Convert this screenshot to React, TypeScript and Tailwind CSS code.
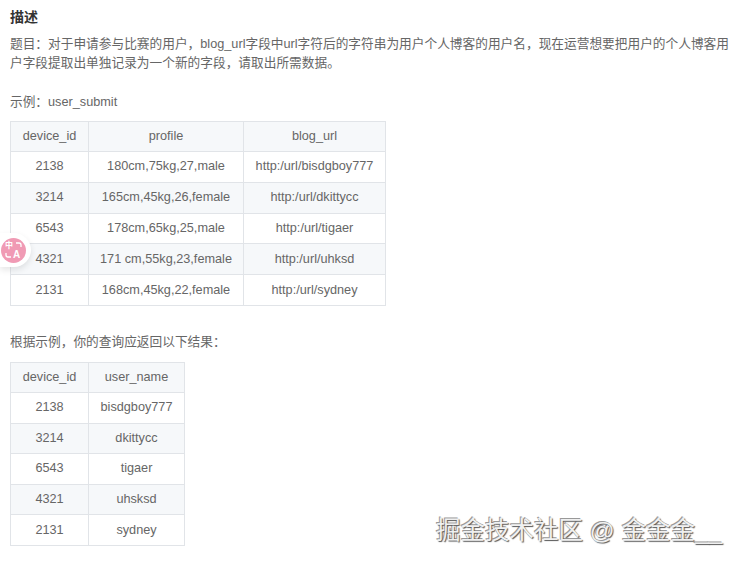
import React from "react";

const sourceRows = [
  ["2138", "180cm,75kg,27,male", "http:/url/bisdgboy777"],
  ["3214", "165cm,45kg,26,female", "http:/url/dkittycc"],
  ["6543", "178cm,65kg,25,male", "http:/url/tigaer"],
  ["4321", "171 cm,55kg,23,female", "http:/url/uhksd"],
  ["2131", "168cm,45kg,22,female", "http:/url/sydney"],
];

const resultRows = [
  ["2138", "bisdgboy777"],
  ["3214", "dkittycc"],
  ["6543", "tigaer"],
  ["4321", "uhsksd"],
  ["2131", "sydney"],
];

type DataTableProps = {
  head: string[];
  rows: string[][];
  widths: string[];
  rowHeight: string;
  className: string;
};

const DataTable = ({ head, rows, widths, rowHeight, className }: DataTableProps) => {
  return (
    <table className={`table-fixed border-collapse text-[12.7px] text-[#666] ${className}`}>
      <colgroup>
        {widths.map((w, i) => (
          <col key={i} className={w} />
        ))}
      </colgroup>
      <thead>
        <tr className="h-[30px] bg-[#f6f8fa]">
          {head.map((h) => (
            <th key={h} className="border border-[#e1e4e8] p-0 text-center font-normal">
              {h}
            </th>
          ))}
        </tr>
      </thead>
      <tbody>
        {rows.map((row, i) => (
          <tr key={row[0]} className={`${rowHeight} ${i % 2 === 1 ? "bg-[#f6f8fa]" : "bg-white"}`}>
            {row.map((cell) => (
              <td key={cell} className="border border-[#e1e4e8] p-0 text-center">
                {cell}
              </td>
            ))}
          </tr>
        ))}
      </tbody>
    </table>
  );
};

export default function App() {
  return (
    <div className="relative h-[563px] w-[739px] overflow-hidden bg-white pl-[10px] pt-[9px] font-['Liberation_Sans','Noto_Sans_CJK_SC',sans-serif] text-[#666]">
      <h2 className="text-[14px] font-bold leading-[17px] text-[#333]">描述</h2>
      <p className="mt-[9px] w-[720px] text-[12.7px] leading-[19px]">
        题目：对于申请参与比赛的用户，blog_url字段中url字符后的字符串为用户个人博客的用户名，现在运营想要把用户的个人博客用户字段提取出单独记录为一个新的字段，请取出所需数据。
      </p>
      <p className="mt-[20px] text-[12.7px] leading-[19px]">示例：user_submit</p>
      <DataTable
        className="mt-[9px] w-[375px]"
        head={["device_id", "profile", "blog_url"]}
        rows={sourceRows}
        rowHeight="h-[30.8px]"
        widths={["w-[78px]", "w-[155px]", "w-[142px]"]}
      />
      <p className="mt-[27px] text-[12.7px] leading-[19px]">根据示例，你的查询应返回以下结果：</p>
      <DataTable
        className="mt-[10px] w-[174px]"
        head={["device_id", "user_name"]}
        rows={resultRows}
        rowHeight="h-[30.6px]"
        widths={["w-[78px]", "w-[96px]"]}
      />

      {/* floating translate button */}
      <div className="absolute left-0 top-[233px] flex h-[34px] w-[31px] items-center justify-end rounded-r-[17px] bg-white pr-[5px] shadow-[0_3px_6px_rgba(0,0,0,0.1)]">
        <div className="relative h-[25px] w-[25px] rounded-full bg-[#f09ab4] font-bold leading-none text-white">
          <span className="absolute left-[4px] top-[3px] text-[8px] leading-[9px]">中</span>
          <span className="absolute left-[12px] top-[12px] text-[10px] leading-[10px]">A</span>
          <svg className="absolute inset-0" width="25" height="25" viewBox="0 0 25 25" fill="none" stroke="white" strokeWidth="1.3">
            <path d="M15 5h3a2 2 0 0 1 2 2v2" />
            <path d="M5 15v2a2 2 0 0 0 2 2h3" />
          </svg>
        </div>
      </div>

      {/* site watermark */}
      <div className="absolute left-[436px] top-[516px] whitespace-nowrap text-[24.5px] leading-[30px] text-[#f0f0f0] [text-shadow:1px_1px_1px_#555,-1px_-1px_0_#999]">
        掘金技术社区 @ 金金金__
      </div>
    </div>
  );
}
